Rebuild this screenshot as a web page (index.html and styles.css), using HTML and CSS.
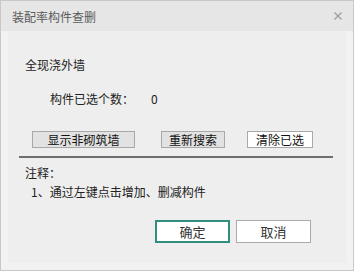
FILE: index.html
```html
<!DOCTYPE html>
<html lang="zh">
   <head>
      <meta charset="UTF-8" />
      <title>装配率构件查删</title>
      <link rel="stylesheet" href="styles.css">
   </head>
   <body>
      <div class="dialog">
         <div class="titlebar">
            <span class="title">装配率构件查删</span>
            <svg class="close" width="8" height="8" viewBox="0 0 8 8">
               <path d="M0.5 0.5 L7.5 7.5 M7.5 0.5 L0.5 7.5" stroke="#a0a0a0" stroke-width="1.4" fill="none"/>
            </svg>
         </div>
         <div class="body">
            <div class="panel">
               <div class="line type">全现浇外墙</div>
               <div class="line count">
                  <span>构件已选个数：</span>
                  <span class="num">0</span>
               </div>
               <div class="actions">
                  <button class="btn gray wide">显示非砌筑墙</button>
                  <button class="btn gray mid">重新搜索</button>
                  <button class="btn white clear">清除已选</button>
               </div>
               <div class="sep"></div>
               <div class="line note">注释：</div>
               <div class="line tip">1、通过左键点击增加、删减构件</div>
               <div class="footer">
                  <button class="fbtn ok">确定</button>
                  <button class="fbtn cancel">取消</button>
               </div>
            </div>
         </div>
      </div>
   </body>
</html>
```

FILE: styles.css
```css
html, body {
margin: 0;
padding: 0;
}
body {
font-family: "Noto Sans CJK SC", "Noto Sans", sans-serif;
font-size: 12px;
color: #222;
background: #fff;
}
.dialog {
width: 354px;
height: 271px;
box-sizing: border-box;
border: 1px solid #c8c8c8;
display: flex;
flex-direction: column;
}
.titlebar {
height: 30px;
background: #e6e6e6;
display: flex;
align-items: center;
justify-content: space-between;
padding: 0 11px 0 11px;
flex-shrink: 0;
}
.title {
font-size: 12px;
color: #5a5a5a;
}
.close {
display: block;
margin-top: -1px;
}
.body {
flex: 1;
background: #f2f2f2;
padding: 0 7px 7px 7px;
display: flex;
}
.panel {
flex: 1;
background: #eeeeee;
padding-top: 26px;
}
.line {
line-height: 16px;
height: 16px;
}
.type {
padding-left: 17px;
}
.count {
margin-top: 18px;
padding-left: 42px;
display: flex;
gap: 17px;
}
.actions {
margin-top: 24px;
display: flex;
padding-left: 24px;
}
.btn {
font-family: inherit;
font-size: 12px;
color: #111;
height: 17px;
padding: 0;
line-height: 15px;
box-sizing: border-box;
border: 1px solid #a8a8a8;
border-radius: 0;
}
.btn.gray {
background: #e2e2e2;
}
.btn.white {
background: #fff;
}
.wide {
width: 103px;
}
.mid {
width: 64px;
margin-left: 26px;
}
.clear {
width: 66px;
margin-left: 22px;
}
.sep {
margin: 8px 0 0 11px;
width: 314px;
height: 2px;
background: #6e6e6e;
}
.note {
margin-top: 7px;
padding-left: 17px;
}
.tip {
margin-top: 3px;
padding-left: 23px;
}
.footer {
margin-top: 20px;
display: flex;
padding-left: 147px;
gap: 6px;
}
.fbtn {
font-family: inherit;
font-size: 13px;
color: #333;
width: 75px;
height: 23px;
padding: 0;
background: #fff;
box-sizing: border-box;
border-radius: 0;
}
.fbtn.ok {
border: 2px solid #2f8f7c;
}
.fbtn.cancel {
border: 1px solid #aaaaaa;
}
```
